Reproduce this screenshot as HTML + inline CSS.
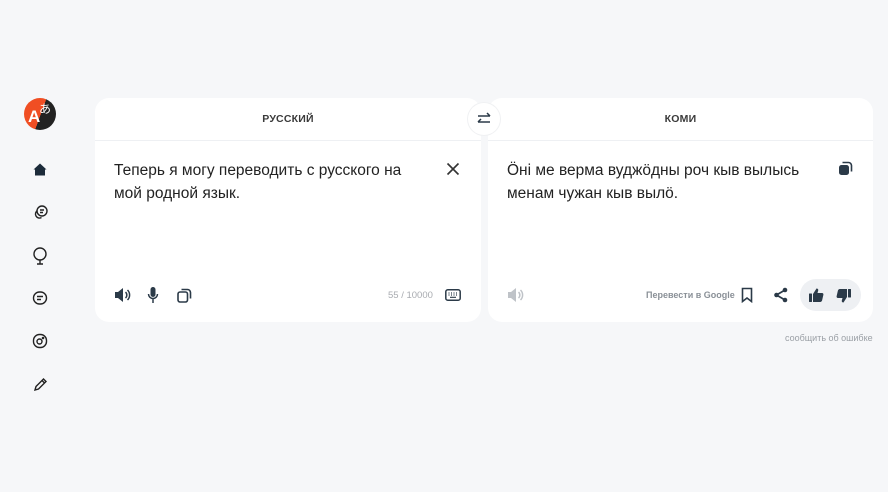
<!DOCTYPE html>
<html><head><meta charset="utf-8"><style>
*{margin:0;padding:0;box-sizing:border-box}
body{width:888px;height:492px;background:#f6f7f9;font-family:"Liberation Sans",sans-serif;position:relative;overflow:hidden;color:#21201f}
.card{position:absolute;top:98px;height:224px;background:#fff;border-radius:14px}
.hdr{height:43px;border-bottom:1px solid #eef0f3;text-align:center;line-height:43px;font-size:10.5px;font-weight:bold;letter-spacing:.2px;color:#3a3a3a}
.txt{position:absolute;left:19px;top:61px;font-size:15.5px;line-height:23px;color:#222}
.ic{position:absolute}
svg{display:block}
</style></head><body>
<div class="ic" style="left:24px;top:98px;width:32px;height:32px;border-radius:50%;overflow:hidden;background:linear-gradient(110deg,#f04e23 0 52%,#222 52% 100%)">
<span style="position:absolute;left:4px;top:9px;color:#fff;font-weight:bold;font-size:17px">A</span>
<span style="position:absolute;left:15px;top:2px;color:#fff;font-size:12px;font-family:'Noto Sans CJK JP',sans-serif">あ</span></div>
<svg class="ic" style="left:32px;top:162px" width="16" height="16" viewBox="0 0 16 16"><path d="M8 1.5L1.5 7.5h1.5v6h10v-6h1.5z" fill="#1c2b3a"/></svg>
<svg class="ic" style="left:32px;top:204px" width="17" height="17" viewBox="0 0 17 17" fill="none" stroke="#222" stroke-width="1.4"><circle cx="10" cy="7" r="5"/><path d="M8 6h4M8 8.5h3"/><path d="M5.5 6.5a4 4 0 1 0 4 7"/></svg>
<svg class="ic" style="left:32px;top:247px" width="16" height="18" viewBox="0 0 16 18" fill="none" stroke="#222" stroke-width="1.4"><circle cx="8" cy="7" r="6"/><path d="M8 13v4M5 17h6"/></svg>
<svg class="ic" style="left:32px;top:290px" width="16" height="16" viewBox="0 0 16 16" fill="none" stroke="#222" stroke-width="1.4"><rect x="1.5" y="2" width="13" height="12" rx="6"/><path d="M5 6.5h6M5 9.5h4"/></svg>
<svg class="ic" style="left:32px;top:333px" width="16" height="16" viewBox="0 0 16 16" fill="none" stroke="#222" stroke-width="1.4"><rect x="1.5" y="1.5" width="13" height="13" rx="6"/><circle cx="7.5" cy="8.5" r="2.5"/><circle cx="11" cy="5" r=".6" fill="#222"/></svg>
<svg class="ic" style="left:33px;top:377px" width="15" height="15" viewBox="0 0 15 15" fill="none" stroke="#222" stroke-width="1.4"><path d="M2 13l1-3.5L10.5 2l2.5 2.5L5.5 12zM9 3.5l2.5 2.5"/></svg>

<div class="card" style="left:95px;width:386px">
<div class="hdr">РУССКИЙ</div>
<div class="txt">Теперь я могу переводить с русского на<br>мой родной язык.</div>
<svg class="ic" style="left:351px;top:64px" width="14" height="14" viewBox="0 0 14 14" stroke="#333" stroke-width="1.6"><path d="M1.5 1.5l11 11M12.5 1.5l-11 11"/></svg>
<svg class="ic" style="left:19px;top:189px" width="18" height="16" viewBox="0 0 18 16"><path d="M1 5h3l5-4v14l-5-4H1z" fill="#2b3a48"/><path d="M11.5 5a4 4 0 0 1 0 6M13.5 3a7 7 0 0 1 0 10" stroke="#2b3a48" stroke-width="1.5" fill="none"/></svg>
<svg class="ic" style="left:52px;top:188px" width="12" height="18" viewBox="0 0 12 18"><rect x="3.5" y="1" width="5" height="10" rx="2.5" fill="#2b3a48"/><path d="M1.5 8a4.5 4.5 0 0 0 9 0M6 12.5V17" stroke="#2b3a48" stroke-width="1.5" fill="none"/></svg>
<svg class="ic" style="left:82px;top:190px" width="15" height="15" viewBox="0 0 15 15" fill="none" stroke="#2b3a48" stroke-width="1.6"><rect x="1" y="4" width="9.5" height="10" rx="2"/><path d="M4.5 1.5h6a3 3 0 0 1 3 3v6"/></svg>
<div class="ic" style="left:293px;top:192px;font-size:9.5px;color:#a8abb0">55 / 10000</div>
<svg class="ic" style="left:350px;top:191px" width="16" height="12" viewBox="0 0 16 12"><rect x=".8" y=".8" width="14.4" height="10.4" rx="2" fill="none" stroke="#2b3a48" stroke-width="1.5"/><path d="M3.5 4h1M6 4h1M8.5 4h1M11 4h1M3.5 6h1M6 6h1M8.5 6h1M11 6h1M5 8.3h6" stroke="#2b3a48" stroke-width="1.2"/></svg>
</div>

<div class="card" style="left:488px;width:385px">
<div class="hdr">КОМИ</div>
<div class="txt">Öнi ме верма вуджöдны роч кыв вылысь<br>менам чужан кыв вылö.</div>
<svg class="ic" style="left:350px;top:63px" width="15" height="15" viewBox="0 0 15 15"><rect x="1" y="4" width="10" height="10" rx="2.5" fill="#2b3a48"/><path d="M4.5 1.5h6a3 3 0 0 1 3 3v6" stroke="#2b3a48" stroke-width="1.6" fill="none"/></svg>
<svg class="ic" style="left:19px;top:189px" width="18" height="16" viewBox="0 0 18 16"><path d="M1 5h3l5-4v14l-5-4H1z" fill="#bfc3c8"/><path d="M11.5 5a4 4 0 0 1 0 6M13.5 3a7 7 0 0 1 0 10" stroke="#bfc3c8" stroke-width="1.5" fill="none"/></svg>
<div class="ic" style="left:158px;top:192px;font-size:9px;font-weight:bold;color:#8a9097">Перевести в Google</div>
<svg class="ic" style="left:253px;top:189px" width="12" height="16" viewBox="0 0 12 16"><path d="M1.5 1.5h9v13L6 11l-4.5 3.5z" fill="none" stroke="#2b3a48" stroke-width="1.6"/></svg>
<svg class="ic" style="left:285px;top:189px" width="16" height="16" viewBox="0 0 16 16"><circle cx="12" cy="3" r="2.3" fill="#2b3a48"/><circle cx="3.5" cy="8" r="2.3" fill="#2b3a48"/><circle cx="12" cy="13" r="2.3" fill="#2b3a48"/><path d="M12 3L3.5 8 12 13" stroke="#2b3a48" stroke-width="1.7" fill="none"/></svg>
<div class="ic" style="left:312px;top:181px;width:61px;height:32px;border-radius:16px;background:#eef0f3"></div>
<svg class="ic" style="left:320px;top:189px" width="16" height="16" viewBox="0 0 16 16" fill="#2b3a48"><rect x="1" y="6.5" width="3" height="8.5" rx=".5"/><path d="M5 7l3.5-5.5c1.2 0 2 .8 1.7 2L9.5 6H14c1 0 1.6.9 1.4 1.8l-1.3 5.6c-.2.9-1 1.6-2 1.6H5z"/></svg>
<svg class="ic" style="left:348px;top:190px" width="16" height="16" viewBox="0 0 16 16" fill="#2b3a48"><g transform="translate(16,16) rotate(180)"><rect x="1" y="6.5" width="3" height="8.5" rx=".5"/><path d="M5 7l3.5-5.5c1.2 0 2 .8 1.7 2L9.5 6H14c1 0 1.6.9 1.4 1.8l-1.3 5.6c-.2.9-1 1.6-2 1.6H5z"/></g></svg>
</div>

<div class="ic" style="left:468px;top:103px;width:32px;height:32px;border-radius:50%;background:#fff;box-shadow:0 0 0 1px #f0f1f3"></div>
<svg class="ic" style="left:477px;top:112px" width="14" height="14" viewBox="0 0 14 14" fill="none" stroke="#2b3a48" stroke-width="1.5"><path d="M1 4h12M10 1l3 3M13 10H1M4 7l-3 3"/></svg>

<div class="ic" style="left:785px;top:333px;font-size:9px;color:#9ba0a6">сообщить об ошибке</div>
</body></html>
